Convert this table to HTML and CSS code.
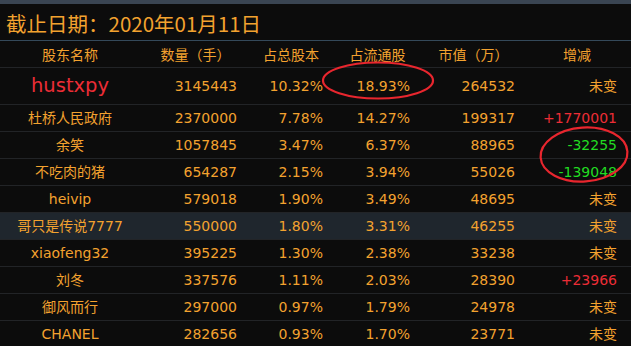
FILE: index.html
```html
<!DOCTYPE html>
<html lang="zh">
<head>
<meta charset="utf-8">
<link rel="stylesheet" href="styles.css">
</head>
<body>
<div class="page">
  <div class="topbar"></div>
  <div class="title">截止日期：2020年01月11日</div>
  <div class="row head">
    <div class="c name">股东名称</div>
    <div class="c">数量（手）</div>
    <div class="c">占总股本</div>
    <div class="c">占流通股</div>
    <div class="c">市值（万）</div>
    <div class="c last">增减</div>
  </div>
  <div class="row big">
    <div class="c name red bigname">hustxpy</div>
    <div class="c">3145443</div><div class="c">10.32%</div><div class="c">18.93%</div><div class="c">264532</div><div class="c last">未变</div>
  </div>
  <div class="row">
    <div class="c name">杜桥人民政府</div>
    <div class="c">2370000</div><div class="c">7.78%</div><div class="c">14.27%</div><div class="c">199317</div><div class="c last red">+1770001</div>
  </div>
  <div class="row">
    <div class="c name">余笑</div>
    <div class="c">1057845</div><div class="c">3.47%</div><div class="c">6.37%</div><div class="c">88965</div><div class="c last green">-32255</div>
  </div>
  <div class="row">
    <div class="c name">不吃肉的猪</div>
    <div class="c">654287</div><div class="c">2.15%</div><div class="c">3.94%</div><div class="c">55026</div><div class="c last green">-139048</div>
  </div>
  <div class="row">
    <div class="c name">heivip</div>
    <div class="c">579018</div><div class="c">1.90%</div><div class="c">3.49%</div><div class="c">48695</div><div class="c last">未变</div>
  </div>
  <div class="row hl">
    <div class="c name">哥只是传说7777</div>
    <div class="c">550000</div><div class="c">1.80%</div><div class="c">3.31%</div><div class="c">46255</div><div class="c last">未变</div>
  </div>
  <div class="row">
    <div class="c name">xiaofeng32</div>
    <div class="c">395225</div><div class="c">1.30%</div><div class="c">2.38%</div><div class="c">33238</div><div class="c last">未变</div>
  </div>
  <div class="row">
    <div class="c name">刘冬</div>
    <div class="c">337576</div><div class="c">1.11%</div><div class="c">2.03%</div><div class="c">28390</div><div class="c last red">+23966</div>
  </div>
  <div class="row">
    <div class="c name">御风而行</div>
    <div class="c">297000</div><div class="c">0.97%</div><div class="c">1.79%</div><div class="c">24978</div><div class="c last">未变</div>
  </div>
  <div class="row">
    <div class="c name">CHANEL</div>
    <div class="c">282656</div><div class="c">0.93%</div><div class="c">1.70%</div><div class="c">23771</div><div class="c last">未变</div>
  </div>
  <svg class="marks" width="631" height="346" viewBox="0 0 631 346">
    <ellipse cx="378" cy="80.5" rx="55" ry="18" fill="none" stroke="#e8262e" stroke-width="2.2"/>
    <ellipse cx="584" cy="154.5" rx="43.5" ry="27" fill="none" stroke="#e8262e" stroke-width="2.2" transform="rotate(-4 584 154.5)"/>
  </svg>
</div>
</body>
</html>
```
FILE: styles.css
```css
html, body {
  margin: 0;
  padding: 0;
  background: #0c0c0c;
}
.page {
  position: relative;
  width: 631px;
  height: 346px;
  overflow: hidden;
  background: #0c0c0c;
  color: #f3a22f;
  font-family: "DejaVu Sans", "Noto Sans CJK SC", sans-serif;
  font-size: 14px;
}
.topbar {
  height: 4px;
  background: #3a4552;
}
.title {
  height: 34px;
  padding: 2px 0 0 6px;
  line-height: 34px;
  font-family: "Noto Sans CJK SC", sans-serif;
  font-size: 20.5px;
  border-bottom: 1px solid #34495a;
}
.row {
  display: grid;
  grid-template-columns: 140px 105px 86px 87px 105px 108px;
  height: 26px;
  line-height: 26px;
  border-bottom: 1px solid #222427;
}
.row.big {
  height: 36px;
  line-height: 36px;
}
.row.hl {
  background: #1f262d;
}
.c {
  text-align: right;
  padding-right: 8px;
  white-space: nowrap;
}
.c.last {
  padding-right: 14px;
}
.c.name {
  text-align: center;
  padding-right: 0;
}
.head .c {
  text-align: center;
  padding-right: 0;
  padding-left: 6px;
  font-family: "Noto Sans CJK SC", sans-serif;
}
.head .c.name {
  padding-left: 0;
}
.head .c.last {
  padding-left: 0;
}
.bigname {
  font-size: 19.5px;
}
.red {
  color: #ec2d36;
}
.green {
  color: #22dc22;
}
.marks {
  position: absolute;
  left: 0;
  top: 0;
  pointer-events: none;
}
```
